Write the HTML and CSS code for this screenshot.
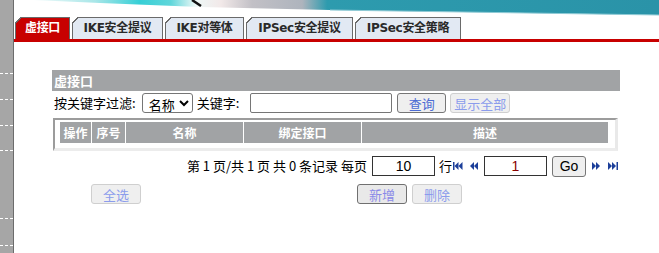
FILE: index.html
```html
<!DOCTYPE html>
<html>
<head>
	<title>虚接口</title>
	<meta charset="utf-8">
	<link rel="stylesheet" href="styles.css">
</head>
<body>
	<!-- 左侧折叠菜单 -->
	<div class="side">
		<div class="menu-item m1"></div>
		<div class="menu-item m2"></div>
		<div class="menu-item m2"></div>
		<div class="menu-item m3"></div>
		<div class="menu-item m4"></div>
		<div class="menu-item m5"></div>
	</div>

	<div class="main">
		<!-- 顶部横幅 -->
		<svg class="banner" width="645" height="17" viewBox="0 0 645 17">
			<defs>
				<linearGradient id="bannerFill" x1="19" y1="0" x2="645" y2="0" gradientUnits="userSpaceOnUse">
					<stop offset="0" stop-color="#f2fbfb"/>
					<stop offset="0.1" stop-color="#a8e6e8"/>
					<stop offset="0.17" stop-color="#36cfd6"/>
					<stop offset="0.22" stop-color="#5fd6da"/>
					<stop offset="0.26" stop-color="#eef8f7"/>
					<stop offset="0.3" stop-color="#f2e9e9"/>
					<stop offset="0.35" stop-color="#c2c0c6"/>
					<stop offset="0.43" stop-color="#aeb4bd"/>
					<stop offset="0.47" stop-color="#2d9bae"/>
					<stop offset="1" stop-color="#2a93a8"/>
				</linearGradient>
			</defs>
			<polygon points="19,0 645,0 645,15 316,10 186,7 86,3" fill="url(#bannerFill)"/>
			<polyline points="316,10 645,15" stroke="#8fcad5" stroke-width="1" fill="none"/>
			<line x1="178" y1="0" x2="187" y2="6" stroke="#111" stroke-width="2.5"/>
		</svg>

		<!-- 选项卡 -->
		<ul class="tabs">
			<li class="tab tab-on w1">虚接口</li>
			<li class="tab w2">IKE安全提议</li>
			<li class="tab w3">IKE对等体</li>
			<li class="tab w4">IPSec安全提议</li>
			<li class="tab w5">IPSec安全策略</li>
		</ul>

		<div class="panel">
			<div class="panel-title">虚接口</div>

			<!-- 过滤条件 -->
			<div class="filter">
				<span class="lbl">按关键字过滤:</span>
				<select class="sel">
					<option>名称</option>
				</select>
				<span class="lbl lbl-kw">关键字:</span>
				<input class="kw" type="text">
				<button class="btn btn-on btn-query">查询</button>
				<button class="btn btn-off btn-all">显示全部</button>
			</div>

			<!-- 列表 -->
			<div class="grid-box">
				<table class="grid">
					<tr>
						<th class="c1">操作</th>
						<th class="c2">序号</th>
						<th class="c3">名称</th>
						<th class="c4">绑定接口</th>
						<th class="c5">描述</th>
					</tr>
				</table>
			</div>

			<!-- 分页 -->
			<div class="pager">
				<span>第 1 页/共 1 页 共 0 条记录 每页</span>
				<input class="pg-input pg-size" type="text" value="10">
				<span class="pg-row">行</span>
				<svg class="pg-ico ico-first" width="10" height="8" viewBox="0 0 10 8">
					<rect x="0" y="0" width="1.5" height="8" fill="#1c3f9a"/>
					<polygon points="1.5,4 5.5,0 5.5,8" fill="#1c3f9a"/>
					<polygon points="5.5,4 9.5,0 9.5,8" fill="#1c3f9a"/>
				</svg>
				<svg class="pg-ico ico-prev" width="8" height="8" viewBox="0 0 8 8">
					<polygon points="0,4 4,0 4,8" fill="#1c3f9a"/>
					<polygon points="4,4 8,0 8,8" fill="#1c3f9a"/>
				</svg>
				<input class="pg-input pg-no" type="text" value="1">
				<button class="go">Go</button>
				<svg class="pg-ico ico-next" width="8" height="8" viewBox="0 0 8 8">
					<polygon points="0,0 4,4 0,8" fill="#1c3f9a"/>
					<polygon points="4,0 8,4 4,8" fill="#1c3f9a"/>
				</svg>
				<svg class="pg-ico ico-last" width="10" height="8" viewBox="0 0 10 8">
					<polygon points="0,0 4,4 0,8" fill="#1c3f9a"/>
					<polygon points="4,0 8,4 4,8" fill="#1c3f9a"/>
					<rect x="8.5" y="0" width="1.5" height="8" fill="#1c3f9a"/>
				</svg>
			</div>

			<!-- 操作按钮 -->
			<div class="ops">
				<button class="btn btn-off op-all">全选</button>
				<button class="btn btn-add op-add">新增</button>
				<button class="btn btn-off op-del">删除</button>
			</div>
		</div>
	</div>
</body>
</html>
```

FILE: styles.css
```css
html,body{
	margin: 0;
	padding: 0;
	height: 100%;
	background-color: #ffffff;
}
body{
	display: flex;
	font-family: "Noto Sans CJK SC", "Liberation Sans", sans-serif;
	font-size: 13px;
	color: #000000;
	overflow: hidden;
}

/*左侧菜单*/
.side{
	width: 13px;
	flex: none;
	background-color: #a6a6a6;
	border-right: 1px solid #6c6c6c;
	display: flex;
	flex-direction: column;
}
.menu-item{
	border-bottom: 1px dashed #ffffff;
}
.m1{ height: 73px; }
.m2{ height: 25px; }
.m3{ height: 24px; }
.m4{ height: 67px; }
.m5{ height: 26px; }

.main{
	flex: 1;
}
.banner{
	display: block;
}

/*选项卡*/
.tabs{
	list-style: none;
	margin: 0;
	padding: 0 0 0 1px;
	height: 22px;
	display: flex;
	align-items: flex-end;
	border-bottom: 3px solid #c80000;
}
.tab{
	position: relative;
	box-sizing: border-box;
	height: 22px;
	margin-right: 2px;
	border: 1px solid #6a6a6a;
	border-bottom: none;
	background-color: #e2e9f3;
	color: #2a2a2a;
	font-family: "DejaVu Sans", "Noto Sans CJK SC", sans-serif;
	font-weight: bold;
	font-size: 12px;
	line-height: 21px;
	text-align: center;
	letter-spacing: -0.3px;
}
/*左上角斜切*/
.tab::before{
	content: "";
	position: absolute;
	left: -1px;
	top: -1px;
	width: 6px;
	height: 6px;
	background: linear-gradient(135deg, #ffffff 0, #ffffff 42%, #6a6a6a 42%, #6a6a6a 60%, transparent 60%);
}
.tab-on{
	background-color: #c80000;
	color: #ffffff;
}
.w1{ width: 55px; }
.w2{ width: 91px; }
.w3{ width: 79px; }
.w4{ width: 107px; }
.w5{ width: 106px; }

/*面板*/
.panel{
	width: 568px;
	margin: 28px 0 0 38px;
}
.panel-title{
	height: 21px;
	line-height: 21px;
	background-color: #a1a3a5;
	color: #ffffff;
	font-weight: bold;
	font-size: 13px;
	padding-left: 2px;
}

.filter{
	display: flex;
	align-items: center;
	height: 20px;
	margin-top: 2px;
	padding-left: 2px;
	line-height: 20px;
}
.sel{
	box-sizing: border-box;
	width: 51px;
	height: 20px;
	margin-left: 6px;
	font-family: "Noto Sans CJK SC", sans-serif;
	font-size: 13px;
	padding: 0 0 0 2px;
	border: 1px solid #767676;
	border-radius: 3px;
	background-color: #ffffff;
}
.lbl-kw{
	margin-left: 4px;
}
.kw{
	box-sizing: border-box;
	width: 142px;
	height: 20px;
	margin-left: 11px;
	border: 1px solid #767676;
	border-radius: 2px;
	padding: 0;
}

.btn{
	box-sizing: border-box;
	height: 20px;
	padding: 0;
	font-family: "Noto Sans CJK SC", sans-serif;
	font-size: 13px;
	line-height: 17px;
	border-radius: 3px;
}
.btn-on{
	border: 1px solid #767676;
	background-color: #efefef;
	color: #4c6cd4;
}
.btn-off{
	border: 1px solid #cfcfcf;
	background-color: #efefef;
	color: #8b9cec;
}
.btn-add{
	border: 1px solid #707070;
	background-color: #e9e9e9;
	color: #8a8ae8;
}
.btn-query{
	width: 49px;
	margin-left: 5px;
}
.btn-all{
	width: 60px;
	margin-left: 4px;
}

/*列表*/
.grid-box{
	margin: 5px 0 0 1px;
	width: 565px;
	box-sizing: border-box;
	border-top: 2px solid #9c9c9c;
	border-left: 2px solid #9c9c9c;
	border-right: 3px solid #e9e9e9;
	border-bottom: 3px solid #ececec;
	padding: 2px 7px 5px 5px;
}
.grid{
	width: 548px;
	border-collapse: collapse;
	table-layout: fixed;
}
.grid th{
	height: 21px;
	padding: 0;
	background-color: #a1a3a5;
	color: #ffffff;
	font-weight: bold;
	font-size: 12px;
	line-height: 21px;
	border-left: 1px solid #ffffff;
}
.grid th.c1{
	border-left: none;
	width: 31px;
}
.c2{ width: 33px; }
.c3{ width: 117px; }
.c4{ width: 117px; }

/*分页*/
.pager{
	display: flex;
	align-items: center;
	justify-content: flex-end;
	height: 20px;
	margin-top: 5px;
	padding-right: 2px;
	line-height: 20px;
}
.pg-input{
	box-sizing: border-box;
	width: 63px;
	height: 20px;
	border: 1px solid #333333;
	padding: 0;
	text-align: center;
	font-family: "Liberation Sans", sans-serif;
	font-size: 14px;
}
.pg-size{
	margin-left: 5px;
}
.pg-no{
	margin-left: 6px;
	color: #8a0000;
}
.pg-row{
	margin-left: 4px;
}
.ico-first{
	margin-left: 1px;
}
.ico-prev{
	margin-left: 7px;
}
.go{
	box-sizing: border-box;
	width: 34px;
	height: 21px;
	margin-left: 5px;
	padding: 0;
	border: 1px solid #767676;
	border-radius: 3px;
	background-color: #efefef;
	font-family: "Liberation Sans", sans-serif;
	font-size: 14px;
	color: #000000;
}
.ico-next{
	margin-left: 6px;
}
.ico-last{
	margin-left: 8px;
}

/*操作按钮*/
.ops{
	display: flex;
	margin-top: 8px;
}
.ops .btn{
	width: 50px;
}
.op-all{
	margin-left: 39px;
}
.op-add{
	margin-left: 216px;
}
.op-del{
	margin-left: 5px;
}
```
